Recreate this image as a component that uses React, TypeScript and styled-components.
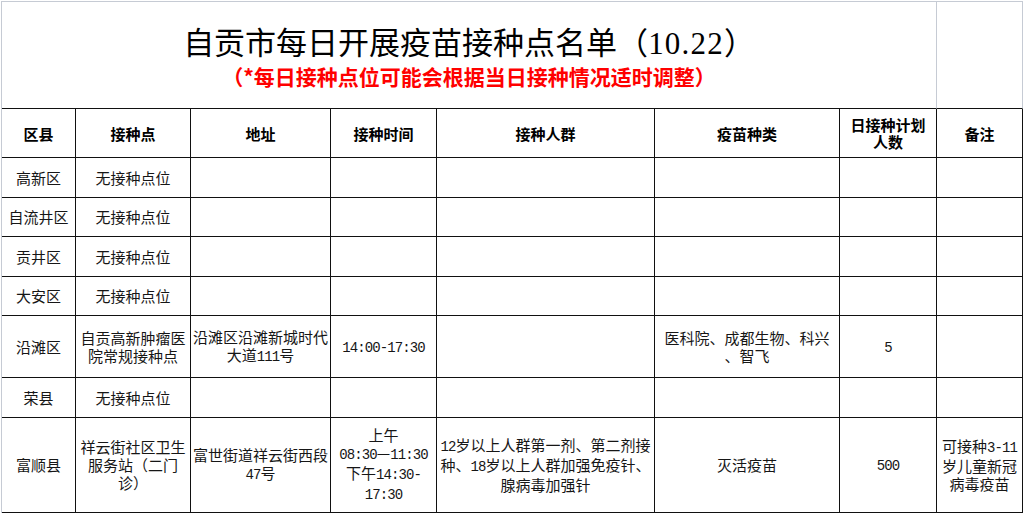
import { Fragment, ReactNode } from "react";
import styled, { createGlobalStyle } from "styled-components";

const GRID = "#c6cbd4";
const LINE = "#111";

const columns = [74, 115, 140, 106, 218, 185, 97, 86];
const rowHeights = [107, 49, 40, 39, 40, 39, 62, 40, 95];

const GlobalStyle = createGlobalStyle`
  html, body {
    margin: 0;
    padding: 0;
    background: #fff;
  }
  body {
    font-family: "Noto Sans CJK SC", "Noto Sans", sans-serif;
    color: #111;
  }
`;

const Sheet = styled.div`
  display: grid;
  grid-template-columns: ${columns.map((c) => `${c}px`).join(" ")};
  grid-template-rows: ${rowHeights.map((r) => `${r}px`).join(" ")};
  width: max-content;
  margin: 1px 0 0 1px;
  border-top: 1px solid ${GRID};
  border-left: 1px solid ${GRID};
`;

const TitleCell = styled.div`
  grid-column: 1 / 8;
  box-sizing: border-box;
  border-right: 1px solid ${GRID};
  border-bottom: 1px solid ${LINE};
  display: flex;
  flex-direction: column;
  align-items: center;
  padding-top: 23px;
  gap: 2px;
`;

const Title = styled.div`
  font-family: "Liberation Serif", "Noto Sans CJK SC", serif;
  font-size: 31px;
  line-height: 37px;
  color: #000;
  white-space: nowrap;
`;

const TitleDate = styled.span`
  letter-spacing: 1.2px;
`;

const Subtitle = styled.div`
  font-size: 21px;
  line-height: 24px;
  font-weight: 700;
  color: #ff0000;
  white-space: nowrap;
`;

const SpareCell = styled.div`
  box-sizing: border-box;
  border-right: 1px solid ${GRID};
  border-bottom: 1px solid ${LINE};
`;

const Cell = styled.div<{ $head?: boolean }>`
  box-sizing: border-box;
  border-right: 1px solid ${LINE};
  border-bottom: 1px solid ${LINE};
  display: flex;
  align-items: center;
  justify-content: center;
  text-align: center;
  overflow: hidden;
  font-size: 15px;
  line-height: ${(p) => (p.$head ? "17px" : "18px")};
  font-weight: ${(p) => (p.$head ? 700 : 400)};
  color: ${(p) => (p.$head ? "#000" : "#161616")};
`;

const CellText = styled.span`
  white-space: pre;
`;

const Num = styled.span`
  font-family: "Liberation Mono", monospace;
  font-size: 14px;
  letter-spacing: -0.9px;
`;

const header = ["区县", "接种点", "地址", "接种时间", "接种人群", "疫苗种类", "日接种计划\n人数", "备注"];

const none = (area: string) => [area, "无接种点位", "", "", "", "", "", ""];

const rows: string[][] = [
  none("高新区"),
  none("自流井区"),
  none("贡井区"),
  none("大安区"),
  [
    "沿滩区",
    "自贡高新肿瘤医\n院常规接种点",
    "沿滩区沿滩新城时代\n大道111号",
    "14:00-17:30",
    "",
    "医科院、成都生物、科兴\n、智飞",
    "5",
    "",
  ],
  none("荣县"),
  [
    "富顺县",
    "祥云街社区卫生\n服务站（二门\n诊）",
    "富世街道祥云街西段\n47号",
    "上午\n08:30—11:30\n下午14:30-\n17:30",
    "12岁以上人群第一剂、第二剂接\n种、18岁以上人群加强免疫针、\n腺病毒加强针",
    "灭活疫苗",
    "500",
    "可接种3-11\n岁儿童新冠\n病毒疫苗",
  ],
];

// digits in the sheet are half-width, so give them a narrow mono face
const withNums = (text: string): ReactNode[] =>
  text.split(/([0-9][0-9:.\-]*)/).map((part, i) =>
    i % 2 === 1 ? <Num key={i}>{part}</Num> : <Fragment key={i}>{part}</Fragment>
  );

export default function App() {
  return (
    <>
      <GlobalStyle />
      <Sheet>
        <TitleCell>
          <Title>
            自贡市每日开展疫苗接种点名单（<TitleDate>10.22</TitleDate>）
          </Title>
          <Subtitle>（*每日接种点位可能会根据当日接种情况适时调整）</Subtitle>
        </TitleCell>
        <SpareCell />
        {header.map((h) => (
          <Cell key={h} $head>
            <CellText>{h}</CellText>
          </Cell>
        ))}
        {rows.map((row, r) =>
          row.map((text, c) => (
            <Cell key={`${r}-${c}`}>
              <CellText>{withNums(text)}</CellText>
            </Cell>
          ))
        )}
      </Sheet>
    </>
  );
}
